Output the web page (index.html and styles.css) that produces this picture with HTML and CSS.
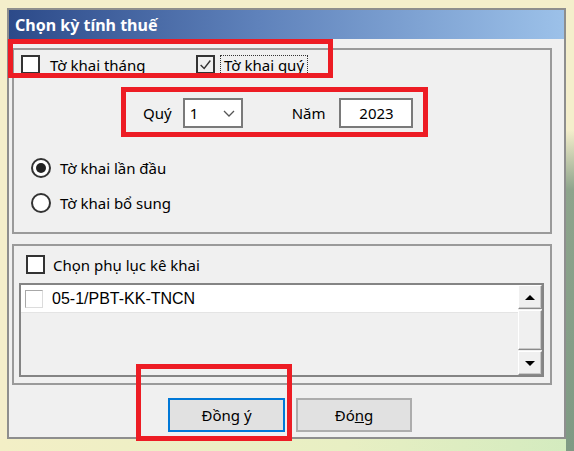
FILE: index.html
```html
<!doctype html>
<html lang="vi">
<head>
  <meta charset="UTF-8">
  <title>Chọn kỳ tính thuế</title>
  <link rel="stylesheet" href="styles.css">
</head>
<body>
  <div class="window">
    <div class="titlebar">Chọn kỳ tính thuế</div>
    <div class="content">
      <div class="group group-top">
        <div class="row-kind">
          <label class="check first">
            <span class="box"></span>
            <span class="text">Tờ khai tháng</span>
          </label>
          <label class="check">
            <span class="box checked">
              <svg width="17" height="17" viewBox="0 0 17 17"><polyline points="3,9 7,13 14,4" fill="none" stroke="#333" stroke-width="1.6"/></svg>
            </span>
            <span class="text focus">Tờ khai quý</span>
          </label>
        </div>
        <div class="row-period">
          <span class="lbl">Quý</span>
          <div class="combo">
            <span>1</span>
            <svg width="12" height="7" viewBox="0 0 12 7"><polyline points="1,1 6,6 11,1" fill="none" stroke="#555" stroke-width="1.3"/></svg>
          </div>
          <span class="lbl lbl-year">Năm</span>
          <div class="textbox">2023</div>
        </div>
        <div class="radios">
          <label class="radio"><span class="dot on"></span><span class="text">Tờ khai lần đầu</span></label>
          <label class="radio"><span class="dot"></span><span class="text">Tờ khai bổ sung</span></label>
        </div>
      </div>

      <div class="group group-bottom">
        <label class="check appendix">
          <span class="box"></span>
          <span class="text">Chọn phụ lục kê khai</span>
        </label>
        <div class="list">
          <div class="items">
            <div class="item"><span class="box small"></span><span class="text">05-1/PBT-KK-TNCN</span></div>
          </div>
          <div class="scroll">
            <div class="sbtn"><span class="tri up"></span></div>
            <div class="thumb"></div>
            <div class="sbtn"><span class="tri down"></span></div>
          </div>
        </div>
      </div>

      <div class="buttons">
        <button class="btn default">Đồn<u>g</u> ý</button>
        <button class="btn">Đó<u>n</u>g</button>
      </div>
    </div>
  </div>

  <div class="mark mark-1"></div>
  <div class="mark mark-2"></div>
  <div class="mark mark-3"></div>
</body>
</html>
```

FILE: styles.css
```css
html, body {
    margin: 0;
    height: 451px;
    overflow: hidden;
}
body {
    position: relative;
    font-family: "Noto Sans", "Open Sans", sans-serif;
    font-size: 15px;
    color: #000;
    background:
        linear-gradient(#f4eecb 130px, #8ea48c 190px, #7f9a84) right top / 8px 100% no-repeat,
        linear-gradient(90deg, #f3efc6, #e8efc3 60%, #d3ebbf) left bottom / 100% 12px no-repeat,
        #f4eecb;
}
.window {
    margin: 8px 0 0 7px;
    width: 559px;
    height: 431px;
    box-sizing: border-box;
    border: 2px solid #8e8e8e;
    background: #f0f0f0;
}
.titlebar {
    height: 29px;
    display: flex;
    align-items: center;
    padding-left: 6px;
    background: linear-gradient(90deg, #2c4a89, #5f82bb 45%, #9cc1e9);
    color: #fff;
    font-weight: bold;
    font-size: 16px;
}
.content {
    padding: 9px 12px 0 3px;
}
.group {
    box-sizing: border-box;
    border: 2px solid #9a9a9a;
}
.group-top {
    height: 186px;
    padding: 5px 0 0 7px;
}
.group-bottom {
    height: 141px;
    margin-top: 10px;
    padding: 9px 0 0 5px;
}

/* checkbox */
.check {
    display: flex;
    align-items: center;
    height: 19px;
}
.check.first {
    width: 175px;
}
.box {
    width: 19px;
    height: 19px;
    box-sizing: border-box;
    border: 2px solid #333;
    background: #fff;
    display: flex;
    align-items: center;
    justify-content: center;
    flex: none;
}
.box.checked {
    background: #f0f0f0;
}
.check .text {
    margin-left: 10px;
}
.check .focus {
    margin-left: 5px;
    padding: 0 3px;
    line-height: 18px;
    border: 1px dotted #333;
}
.row-kind {
    display: flex;
}
.appendix {
    margin-left: 7px;
}
.appendix .text {
    margin-left: 8px;
}

/* quy / nam */
.row-period {
    display: flex;
    align-items: center;
    margin: 24px 0 0 122px;
    height: 30px;
}
.combo, .textbox {
    height: 30px;
    box-sizing: border-box;
    border: 2px solid #7a7a7a;
    background: #fff;
}
.combo {
    width: 60px;
    margin-left: 11px;
    display: flex;
    align-items: center;
    justify-content: space-between;
    padding: 0 6px 0 5px;
}
.lbl-year {
    margin-left: 49px;
}
.textbox {
    width: 74px;
    margin-left: 14px;
    display: flex;
    align-items: center;
    justify-content: center;
}

/* radios */
.radios {
    margin: 30px 0 0 10px;
}
.radio {
    display: flex;
    align-items: center;
    height: 20px;
    margin-bottom: 15px;
}
.dot {
    width: 20px;
    height: 20px;
    box-sizing: border-box;
    border: 2px solid #333;
    border-radius: 50%;
    background: #fff;
    display: flex;
    align-items: center;
    justify-content: center;
}
.dot.on:after {
    content: "";
    width: 10px;
    height: 10px;
    border-radius: 50%;
    background: #222;
}
.radio .text {
    margin-left: 9px;
}

/* list */
.list {
    display: flex;
    width: 525px;
    height: 94px;
    margin-top: 9px;
    box-sizing: border-box;
    border: 2px solid #848484;
    background: #f0f0f0;
}
.items {
    flex: 1;
}
.item {
    display: flex;
    align-items: center;
    height: 27px;
    padding-left: 4px;
    background: #fff;
    border-bottom: 1px solid #e4e4e4;
    font-family: "Liberation Sans", Arial, sans-serif;
    font-size: 16px;
}
.box.small {
    width: 18px;
    height: 18px;
    border: 1px solid #dcdcdc;
    border-top-color: #a8a8a8;
    border-left-color: #a8a8a8;
}
.item .text {
    margin-left: 9px;
}
.scroll {
    width: 24px;
    display: flex;
    flex-direction: column;
    background: #f0f0f0;
}
.sbtn, .thumb {
    box-sizing: border-box;
    background: #f0f0f0;
    border: 1px solid;
    border-color: #fff #8a8a8a #8a8a8a #fff;
    box-shadow: inset -1px -1px 0 #c8c8c8;
}
.sbtn {
    height: 24px;
    display: flex;
    align-items: center;
    justify-content: center;
}
.thumb {
    flex: 1;
    margin: 1px 0;
}
.tri {
    width: 0;
    height: 0;
    border-left: 5px solid transparent;
    border-right: 5px solid transparent;
}
.tri.up {
    border-bottom: 5px solid #000;
}
.tri.down {
    border-top: 5px solid #000;
}

/* buttons */
.buttons {
    display: flex;
    gap: 11px;
    margin: 13px 0 0 156px;
}
.btn {
    height: 34px;
    box-sizing: border-box;
    font-family: inherit;
    font-size: 15px;
    color: #000;
    background: #e1e1e1;
    border: 2px solid #adadad;
    padding: 0;
}
.btn.default {
    width: 117px;
    border-color: #0078d7;
}
.btn:not(.default) {
    width: 116px;
}

/* red annotation frames */
.mark {
    position: absolute;
    box-sizing: border-box;
    border: 5px solid #ed1c24;
}
.mark-1 {
    left: 8px;
    top: 39px;
    width: 325px;
    height: 39px;
}
.mark-2 {
    left: 121px;
    top: 87px;
    width: 307px;
    height: 50px;
}
.mark-3 {
    left: 136px;
    top: 364px;
    width: 156px;
    height: 77px;
}
```
